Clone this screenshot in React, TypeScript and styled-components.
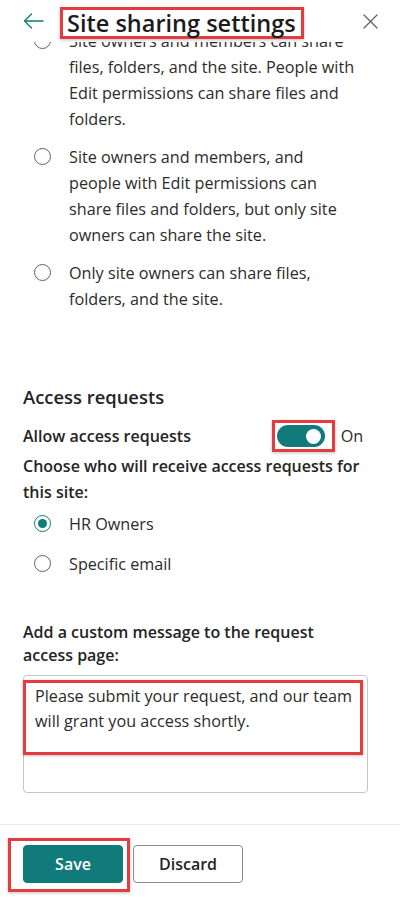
import React, { useState } from "react";
import styled, { createGlobalStyle } from "styled-components";

const GlobalStyle = createGlobalStyle`
  html, body {
    margin: 0;
    padding: 0;
    background: #ffffff;
  }
  body {
    font-family: "Segoe UI", "Open Sans", "Noto Sans", sans-serif;
    color: #242424;
  }
`;

const TEAL = "#117a7a";
const MARK = "#e23b40";

const Panel = styled.div`
  width: 400px;
  height: 897px;
  display: flex;
  flex-direction: column;
  background: #fff;
  overflow: hidden;
`;

const Header = styled.header`
  position: relative;
  z-index: 2;
  height: 42px;
  flex-shrink: 0;
  display: flex;
  align-items: center;
  padding: 0 22px 0 23px;
  background: #fff;
`;

const IconButton = styled.button`
  border: none;
  background: none;
  padding: 0;
  display: flex;
  align-items: center;
  cursor: pointer;
`;

const Title = styled.h1`
  margin: 4px 0 0 16px;
  padding: 0 5px 0 4px;
  border: 3px solid ${MARK};
  box-shadow: 0 1px 3px rgba(0, 0, 0, 0.25);
  font-size: 23.5px;
  font-weight: 600;
  line-height: 26px;
  color: #1b1b1b;
  white-space: nowrap;
  background: #fff;
`;

const Spacer = styled.div`
  flex: 1;
`;

const Body = styled.main`
  flex: 1;
  overflow: hidden;
  padding: 0 32px 0 23px;
`;

const Scroll = styled.div`
  margin-top: -14px;
`;

const RadioList = styled.div<{ gap: number }>`
  display: flex;
  flex-direction: column;
  gap: ${(p) => p.gap}px;
`;

const RadioRow = styled.label`
  display: grid;
  grid-template-columns: 17px 1fr;
  column-gap: 18px;
  padding-left: 11px;
  font-size: 16.2px;
  line-height: 26px;
  color: #2b2b2b;
  white-space: nowrap;
  cursor: pointer;
`;

const Circle = styled.span<{ checked: boolean }>`
  width: 17px;
  height: 17px;
  margin-top: 4px;
  box-sizing: border-box;
  border-radius: 50%;
  border: 1px solid ${(p) => (p.checked ? TEAL : "#616161")};
  display: flex;
  align-items: center;
  justify-content: center;
  &::after {
    content: "";
    width: 9px;
    height: 9px;
    border-radius: 50%;
    background: ${(p) => (p.checked ? TEAL : "transparent")};
  }
`;

const SectionTitle = styled.h2`
  margin: 73px 0 0;
  font-size: 18.4px;
  font-weight: 600;
  line-height: 24px;
  color: #242424;
`;

const ToggleRow = styled.div`
  display: grid;
  grid-template-columns: 249px auto auto;
  align-items: center;
  margin-top: 10px;
  height: 34px;
`;

const Strong = styled.div`
  font-size: 16px;
  font-weight: 600;
  line-height: 26px;
  color: #242424;
  white-space: nowrap;
`;

const Mark = styled.div`
  border: 3px solid ${MARK};
  padding: 2px;
  box-shadow: 0 1px 3px rgba(0, 0, 0, 0.25);
  display: flex;
`;

const Track = styled.button<{ on: boolean }>`
  width: 48px;
  height: 22px;
  border-radius: 11px;
  border: none;
  padding: 0 4px;
  display: flex;
  align-items: center;
  justify-content: ${(p) => (p.on ? "flex-end" : "flex-start")};
  background: ${(p) => (p.on ? TEAL : "#c8c8c8")};
  cursor: pointer;
`;

const Knob = styled.span`
  width: 15px;
  height: 15px;
  border-radius: 50%;
  background: #fff;
`;

const OnLabel = styled.span`
  margin-left: 6px;
  font-size: 16.2px;
  color: #2b2b2b;
`;

const Prompt = styled(Strong)`
  margin: 0 0 6px;
`;

const MessageLabel = styled(Strong)`
  margin-top: 44px;
  line-height: 23px;
`;

const Field = styled.div`
  position: relative;
  margin-top: 8px;
  height: 118px;
  box-sizing: border-box;
  border: 1px solid #c6c6c6;
  border-radius: 4px;
  padding: 8px 8px 0 11px;
  font-size: 16.2px;
  line-height: 25px;
  color: #2b2b2b;
  white-space: nowrap;
`;

const FieldMark = styled.div`
  position: absolute;
  left: -1px;
  top: 4px;
  width: 340px;
  height: 75px;
  box-sizing: border-box;
  border: 3px solid ${MARK};
  box-shadow: 0 1px 3px rgba(0, 0, 0, 0.25);
  pointer-events: none;
`;

const Footer = styled.footer`
  flex-shrink: 0;
  height: 73px;
  box-sizing: border-box;
  border-top: 1px solid #e8e8e8;
  padding: 13px 0 0 8px;
  display: flex;
  align-items: flex-start;
`;

const SaveMark = styled.div`
  border: 3px solid ${MARK};
  padding: 4px 4px 6px 12px;
  box-shadow: 0 1px 3px rgba(0, 0, 0, 0.25);
  display: flex;
`;

const Button = styled.button<{ primary?: boolean }>`
  height: 38px;
  width: ${(p) => (p.primary ? 100 : 110)}px;
  border-radius: 4px;
  box-sizing: border-box;
  border: 1px solid ${(p) => (p.primary ? TEAL : "#8a8a8a")};
  background: ${(p) => (p.primary ? TEAL : "#fff")};
  color: ${(p) => (p.primary ? "#fff" : "#242424")};
  font-family: inherit;
  font-size: 16px;
  font-weight: 600;
  cursor: pointer;
`;

const DiscardButton = styled(Button)`
  margin: 7px 0 0 3px;
`;

const sharingOptions = [
  [
    "Site owners and members can share",
    "files, folders, and the site. People with",
    "Edit permissions can share files and",
    "folders.",
  ],
  [
    "Site owners and members, and",
    "people with Edit permissions can",
    "share files and folders, but only site",
    "owners can share the site.",
  ],
  ["Only site owners can share files,", "folders, and the site."],
];

function Lines({ lines }: { lines: string[] }) {
  return (
    <span>
      {lines.map((l, i) => (
        <React.Fragment key={i}>
          {l}
          {i < lines.length - 1 && <br />}
        </React.Fragment>
      ))}
    </span>
  );
}

export default function App() {
  const [sharing, setSharing] = useState(0);
  const [allow, setAllow] = useState(true);
  const [receiver, setReceiver] = useState("owners");

  return (
    <Panel>
      <GlobalStyle />
      <Header>
        <IconButton aria-label="Back">
          <svg width="21" height="16" viewBox="0 0 21 16" fill="none">
            <path
              d="M20 8H1.5M8.5 1L1.5 8l7 7"
              stroke={TEAL}
              strokeWidth="1.3"
              strokeLinecap="round"
              strokeLinejoin="round"
            />
          </svg>
        </IconButton>
        <Title>Site sharing settings</Title>
        <Spacer />
        <IconButton aria-label="Close">
          <svg width="15" height="15" viewBox="0 0 15 15">
            <path
              d="M1 1l13 13M14 1L1 14"
              stroke="#616161"
              strokeWidth="1.3"
              strokeLinecap="round"
            />
          </svg>
        </IconButton>
      </Header>

      <Body>
        <Scroll>
          <RadioList gap={12}>
            {sharingOptions.map((lines, i) => (
              <RadioRow key={i} onClick={() => setSharing(i)}>
                <Circle checked={false} />
                <Lines lines={lines} />
              </RadioRow>
            ))}
          </RadioList>

          <SectionTitle>Access requests</SectionTitle>
          <ToggleRow>
            <Strong>Allow access requests</Strong>
            <Mark>
              <Track on={allow} onClick={() => setAllow(!allow)}>
                <Knob />
              </Track>
            </Mark>
            <OnLabel>{allow ? "On" : "Off"}</OnLabel>
          </ToggleRow>
          <Prompt>
            Choose who will receive access requests for
            <br />
            this site:
          </Prompt>
          <RadioList gap={14}>
            <RadioRow onClick={() => setReceiver("owners")}>
              <Circle checked={receiver === "owners"} />
              <span>HR Owners</span>
            </RadioRow>
            <RadioRow onClick={() => setReceiver("email")}>
              <Circle checked={receiver === "email"} />
              <span>Specific email</span>
            </RadioRow>
          </RadioList>

          <MessageLabel>
            Add a custom message to the request
            <br />
            access page:
          </MessageLabel>
          <Field>
            Please submit your request, and our team
            <br />
            will grant you access shortly.
            <FieldMark />
          </Field>
        </Scroll>
      </Body>

      <Footer>
        <SaveMark>
          <Button primary>Save</Button>
        </SaveMark>
        <DiscardButton>Discard</DiscardButton>
      </Footer>
    </Panel>
  );
}
